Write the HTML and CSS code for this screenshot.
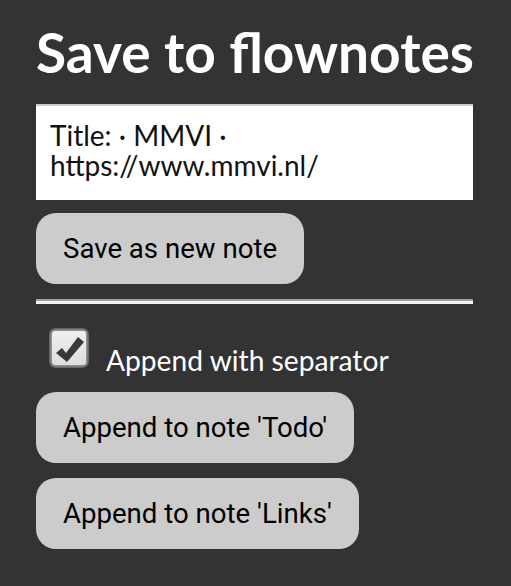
FILE: index.html
```html
<!DOCTYPE html>
<html>
<head>
<meta charset="utf-8">
<link rel="stylesheet" href="styles.css">
</head>
<body>
<main class="popup">
  <h1 class="title">Save to flownotes</h1>
  <div class="note-text">Title: · MMVI · https://www.mmvi.nl/</div>
  <div class="row"><button class="btn">Save as new note</button></div>
  <hr class="divider">
  <label class="check-row">
    <span class="checkbox">
      <svg viewBox="0 0 40 40" width="40" height="40">
        <defs>
          <linearGradient id="cbg" x1="0" y1="0" x2="0" y2="1">
            <stop offset="0" stop-color="#f0f0f0"/>
            <stop offset="1" stop-color="#dcdcdc"/>
          </linearGradient>
        </defs>
        <rect x="1.5" y="1.5" width="37" height="37" rx="5" fill="url(#cbg)" stroke="#7a7a7a" stroke-width="2.5"/>
        <path d="M7 25 L13 20 L17 25 L29 9 L35 14 L18 34 Z" fill="#383838"/>
      </svg>
    </span>
    <span class="check-label">Append with separator</span>
  </label>
  <div class="row"><button class="btn">Append to note 'Todo'</button></div>
  <div class="row"><button class="btn">Append to note 'Links'</button></div>
</main>
</body>
</html>
```
FILE: styles.css
```css
html, body {
  margin: 0;
  padding: 0;
  background: #333333;
}
.popup {
  width: 437px;
  padding: 0 0 0 36px;
  display: flex;
  flex-direction: column;
}
.title {
  margin: 19px 0 0 0;
  font-family: Lato, sans-serif;
  font-weight: 700;
  font-size: 55px;
  line-height: 66px;
  color: #ffffff;
  white-space: nowrap;
}
.note-text {
  margin-top: 19px;
  height: 96px;
  box-sizing: border-box;
  background: #ffffff;
  border-top: 2px solid #cccccc;
  padding: 14px 14px 0 14px;
  font-family: Lato, sans-serif;
  font-size: 28px;
  line-height: 30px;
  color: #111111;
  width: 437px;
}
.row {
  display: flex;
}
.btn {
  font-family: Roboto, sans-serif;
  font-size: 27.6px;
  color: #000000;
  background: #cccccc;
  border: none;
  border-radius: 20px;
  height: 71px;
  padding: 0 27px;
  margin: 0;
}
.note-text + .row {
  margin-top: 13px;
}
.divider {
  margin: 15px 0 0 0;
  width: 437px;
  height: 0;
  border: none;
  border-top: 2px solid #a0a0a0;
  border-bottom: 3px solid #f2f2f2;
  box-sizing: content-box;
}
.check-row {
  display: flex;
  align-items: flex-end;
  margin-top: 24px;
  padding-left: 13px;
  gap: 17px;
}
.checkbox {
  display: block;
  width: 40px;
  height: 40px;
}
.checkbox svg {
  display: block;
}
.check-label {
  font-family: Lato, sans-serif;
  font-size: 28.2px;
  line-height: 30px;
  color: #ffffff;
  margin-bottom: -7px;
}
.check-row + .row {
  margin-top: 24px;
}
.row + .row {
  margin-top: 15px;
}
```
